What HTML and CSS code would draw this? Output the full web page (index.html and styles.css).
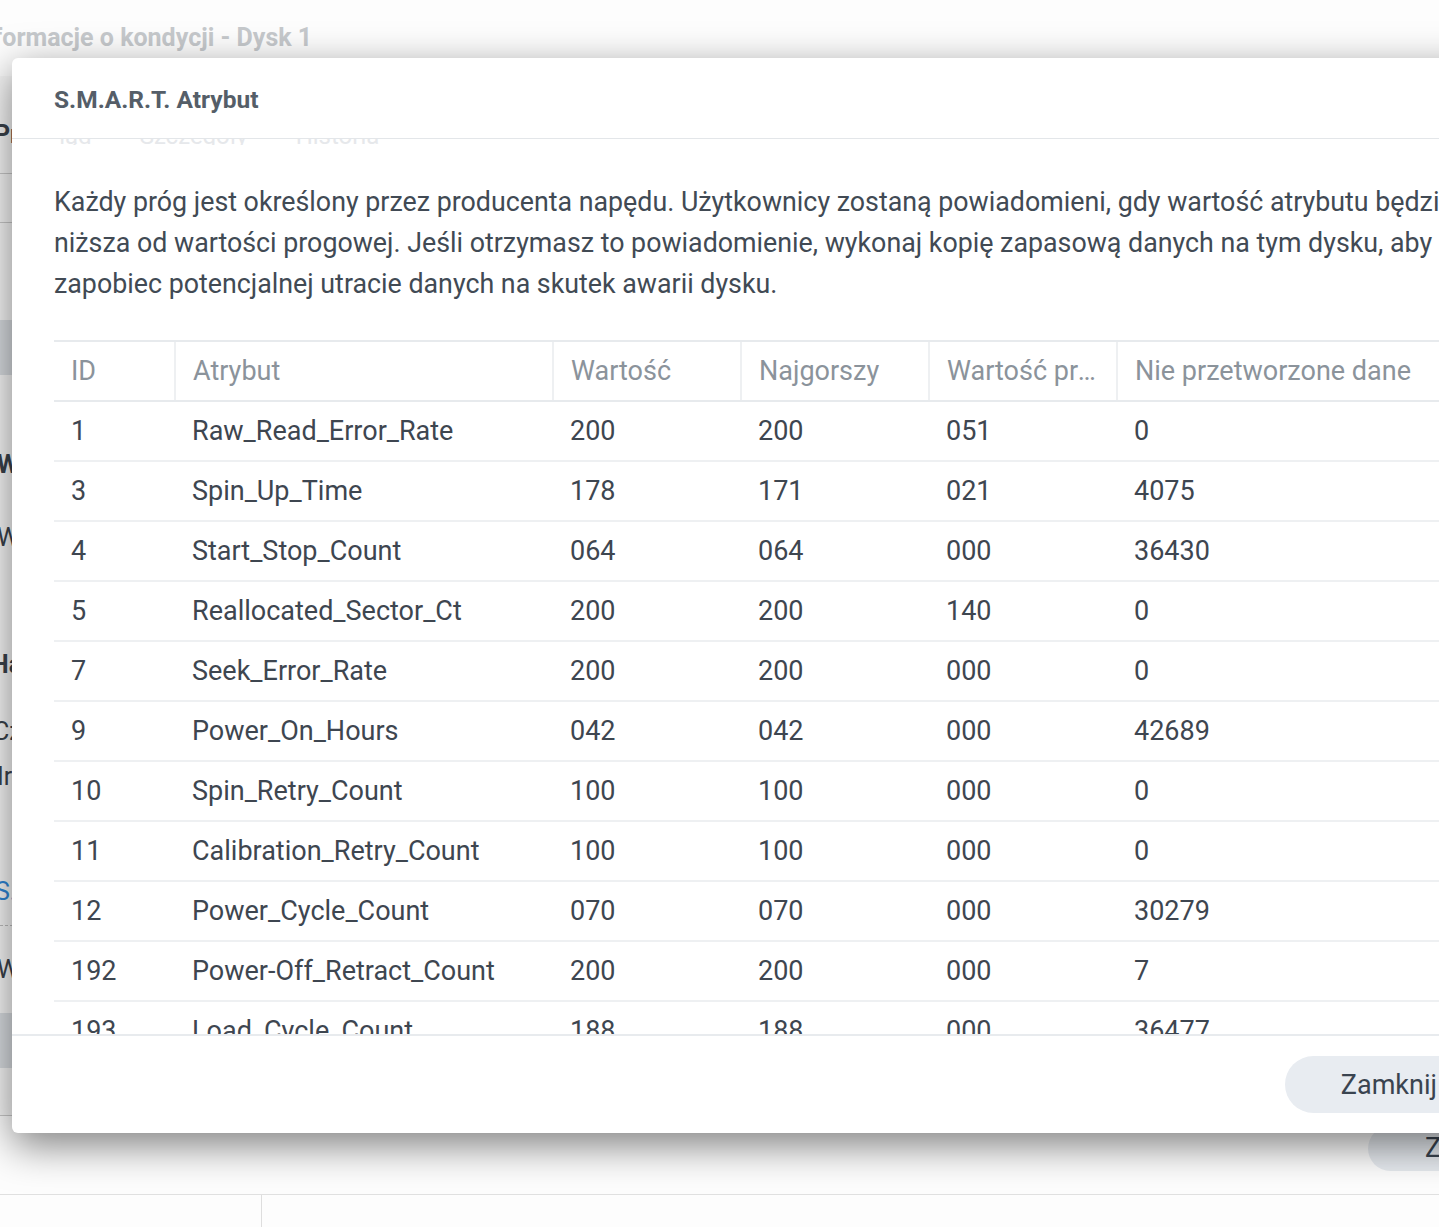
FILE: index.html
```html
<!DOCTYPE html>
<html lang="pl">
<head>
<meta charset="utf-8">
<title>S.M.A.R.T. Atrybut</title>
<link rel="stylesheet" href="styles.css">
</head>
<body>
<div class="desk">
  <div class="bgwin">
    <div class="bg-title">Informacje o kondycji - Dysk 1</div>
    <div class="bg-tabs"><span class="bold">Przegląd</span></div>
    <div class="bg-row"></div>
    <div class="bg-block b1"></div>
    <div class="bg-text bold t1">Wolumin</div>
    <div class="bg-text t2">Wartość</div>
    <div class="bg-text bold t3">Hasło</div>
    <div class="bg-text t4">Czas</div>
    <div class="bg-text t5">Ir</div>
    <div class="bg-text link t6">S.M.A.R.T.</div>
    <div class="bg-dash"></div>
    <div class="bg-text t7">Wynik</div>
    <div class="bg-block b2"></div>
    <div class="bg-line"></div>
    <div class="bg-foot"><span class="bg-btn">Zamknij</span></div>
  </div>
  <div class="below"><div class="below-side"></div><div class="below-main"></div></div>

  <div class="modal">
    <div class="m-head">S.M.A.R.T. Atrybut</div>
    <div class="ghost"><span>Przegląd</span><span>Szczegóły</span><span>Historia</span></div>
    <div class="m-body">
      <p class="desc">Każdy próg jest określony przez producenta napędu. Użytkownicy zostaną powiadomieni, gdy wartość atrybutu będzie<br>niższa od wartości progowej. Jeśli otrzymasz to powiadomienie, wykonaj kopię zapasową danych na tym dysku, aby<br>zapobiec potencjalnej utracie danych na skutek awarii dysku.</p>
      <div class="grid-wrap">
        <table class="grid">
          <colgroup>
            <col class="c-id"><col class="c-attr"><col class="c-num"><col class="c-num"><col class="c-num"><col class="c-raw">
          </colgroup>
          <thead>
            <tr><th>ID</th><th>Atrybut</th><th>Wartość</th><th>Najgorszy</th><th>Wartość progowa</th><th>Nie przetworzone dane</th></tr>
          </thead>
          <tbody>
            <tr><td>1</td><td>Raw_Read_Error_Rate</td><td>200</td><td>200</td><td>051</td><td>0</td></tr>
            <tr><td>3</td><td>Spin_Up_Time</td><td>178</td><td>171</td><td>021</td><td>4075</td></tr>
            <tr><td>4</td><td>Start_Stop_Count</td><td>064</td><td>064</td><td>000</td><td>36430</td></tr>
            <tr><td>5</td><td>Reallocated_Sector_Ct</td><td>200</td><td>200</td><td>140</td><td>0</td></tr>
            <tr><td>7</td><td>Seek_Error_Rate</td><td>200</td><td>200</td><td>000</td><td>0</td></tr>
            <tr><td>9</td><td>Power_On_Hours</td><td>042</td><td>042</td><td>000</td><td>42689</td></tr>
            <tr><td>10</td><td>Spin_Retry_Count</td><td>100</td><td>100</td><td>000</td><td>0</td></tr>
            <tr><td>11</td><td>Calibration_Retry_Count</td><td>100</td><td>100</td><td>000</td><td>0</td></tr>
            <tr><td>12</td><td>Power_Cycle_Count</td><td>070</td><td>070</td><td>000</td><td>30279</td></tr>
            <tr><td>192</td><td>Power-Off_Retract_Count</td><td>200</td><td>200</td><td>000</td><td>7</td></tr>
            <tr><td>193</td><td>Load_Cycle_Count</td><td>188</td><td>188</td><td>000</td><td>36477</td></tr>
          </tbody>
        </table>
      </div>
    </div>
    <div class="m-foot"><button class="btn">Zamknij</button></div>
  </div>
</div>
</body>
</html>
```

FILE: styles.css
```css
* { box-sizing: border-box; }
html, body { margin: 0; padding: 0; }
body {
  width: 1439px;
  height: 1227px;
  overflow: hidden;
  background: #fdfdfd;
  font-family: Roboto, "Noto Sans", sans-serif;
}
.desk {
  position: relative;
  width: 1439px;
  height: 1227px;
  overflow: hidden;
  display: flex;
  flex-direction: column;
}
.bgwin {
  height: 1195px;
  flex: none;
  display: flex;
  flex-direction: column;
  background: #f7f7f7;
  border-bottom: 1px solid #e0e0e0;
  color: #3a424b;
  font-size: 25px;
}
.bold { font-weight: 700; }
.bg-title {
  height: 76px;
  line-height: 76px;
  margin-left: -28px;
  font-weight: 700;
  font-size: 25px;
  color: #c6c9cc;
  background: #fdfdfd;
  white-space: nowrap;
}
.bg-tabs {
  height: 98px;
  padding-top: 39px;
  line-height: 40px;
  margin-left: -6px;
  border-bottom: 1px solid #c9c9c9;
}
.bg-row { height: 49px; border-bottom: 1px solid #c9c9c9; }
.bg-block { height: 55px; background: #d9dde1; }
.b1 { margin-top: 97px; }
.b2 { margin-top: 23px; }
.bg-text { height: 40px; line-height: 40px; margin-left: -3px; white-space: nowrap; }
.t1 { margin-top: 70px; }
.t2 { margin-top: 33px; }
.t3 { margin-top: 87px; margin-left: -9px; }
.t4 { margin-top: 27px; margin-left: -7px; }
.t5 { margin-top: 5px; }
.t6 { margin-top: 75px; margin-left: -5px; }
.t7 { margin-top: 24px; }
.link { color: #2f86d6; }
.bg-dash { margin-top: 13px; height: 1px; border-top: 1px dashed #bdbdbd; }
.bg-line { margin-top: 47px; border-top: 1px solid #c9c9c9; }
.bg-foot {
  flex: 1;
  display: flex;
  justify-content: flex-start;
  align-items: flex-start;
  padding-top: 10px;
  padding-left: 1368px;
  background: #fdfdfd;
}
.bg-btn {
  display: inline-block;
  height: 45px;
  padding: 0 57px;
  line-height: 45px;
  border-radius: 23px;
  background: #e6eaef;
  font-size: 27px;
  color: #3a4450;
  white-space: nowrap;
}
.below { flex: 1; display: flex; background: #fdfdfd; }
.below-side { width: 262px; border-right: 1px solid #dedede; }
.below-main { flex: 1; }

/* modal */
.modal {
  position: absolute;
  left: 12px;
  top: 58px;
  width: 1522px;
  height: 1075px;
  background: #fff;
  border-radius: 6px;
  box-shadow: 0 12px 40px rgba(0, 0, 0, 0.5);
  display: flex;
  flex-direction: column;
  overflow: hidden;
}
.m-head {
  height: 81px;
  flex: none;
  padding: 3px 42px 0;
  display: flex;
  align-items: center;
  border-bottom: 1px solid #e3e6e9;
  font-size: 24.5px;
  font-weight: 700;
  color: #555e68;
}
.ghost {
  height: 6px;
  flex: none;
  overflow: hidden;
  margin-left: 48px;
  display: flex;
  gap: 48px;
  font-size: 24px;
  line-height: 24px;
  color: #e6e8eb;
  white-space: nowrap;
}
.ghost span { margin-top: -15px; }
.ghost span:first-child { margin-left: -62px; }
.m-body {
  flex: 1;
  min-height: 0;
  display: flex;
  flex-direction: column;
  padding: 0 42px;
}
.desc {
  margin: 37px 0 0;
  font-size: 26.8px;
  line-height: 41px;
  color: #414a54;
  white-space: nowrap;
}
.grid-wrap {
  flex: 1;
  min-height: 0;
  margin-top: 35px;
  overflow: hidden;
}
.grid {
  width: 100%;
  table-layout: fixed;
  border-collapse: collapse;
  font-size: 27px;
}
.c-id { width: 121px; }
.c-attr { width: 378px; }
.c-num { width: 188px; }
.grid th {
  height: 60px;
  padding: 0 17px;
  text-align: left;
  font-weight: 400;
  color: #8b939b;
  border-top: 2px solid #e7eaed;
  border-bottom: 2px solid #e7eaed;
  border-left: 2px solid #eef0f2;
  white-space: nowrap;
  overflow: hidden;
  text-overflow: ellipsis;
}
.grid th:first-child { border-left: 0; }
.grid td {
  height: 60px;
  padding: 0 17px;
  color: #3e4650;
  border-bottom: 2px solid #eef0f2;
  white-space: nowrap;
  overflow: hidden;
}
.m-foot {
  height: 99px;
  flex: none;
  border-top: 2px solid #e8ebee;
  display: flex;
  align-items: center;
  justify-content: flex-end;
  padding: 0 41px 0 0;
}
.btn {
  height: 57px;
  padding: 0 56px;
  border: 0;
  border-radius: 29px;
  background: #e8ecf1;
  color: #3a4450;
  font-family: Roboto, "Noto Sans", sans-serif;
  font-size: 27px;
}
```
